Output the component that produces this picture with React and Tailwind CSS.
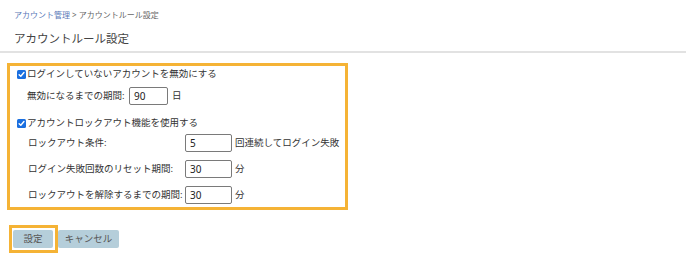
import React from "react";

const font = { fontFamily: '"Noto Sans", "Noto Sans CJK JP", sans-serif' };

function Check() {
  return (
    <span className="inline-flex h-[9px] w-[9px] shrink-0 items-center justify-center rounded-[1.5px] bg-[#1a6fe0]">
      <svg width="7" height="7" viewBox="0 0 8 8">
        <path d="M1.3 4.2 L3.2 6 L6.8 1.8" fill="none" stroke="#fff" strokeWidth="1.6" strokeLinecap="round" strokeLinejoin="round" />
      </svg>
    </span>
  );
}

function Input({ value, w }) {
  return (
    <div className={`flex h-[18px] ${w} items-center rounded-[2px] border border-[#7a7a7a] bg-white pl-[4px] text-[10px] text-[#222]`}>
      {value}
    </div>
  );
}

export default function App() {
  return (
    <div className="h-[257px] w-[686px] bg-white text-[#333]" style={font}>
      <div className="pl-[14px] pt-[10px] text-[8px] leading-[10px]">
        <span className="text-[#5a78b8]">アカウント管理</span>
        <span className="text-[#666]"> &gt; アカウントルール設定</span>
      </div>
      <div className="pl-[14px] pt-[12px] text-[11.5px] leading-[14px] text-[#444]">アカウントルール設定</div>
      <div className="mt-[5px] h-[2px] w-full bg-[#e2e2e2]" />
      <div className="ml-[7px] mt-[10px] w-[341px] border-[3px] border-[#f5b335] pb-[3px] pl-[7px] pt-0 text-[9.5px]">
        <div className="flex h-[16px] items-center gap-[1px]">
          <Check />
          <span>ログインしていないアカウントを無効にする</span>
        </div>
        <div className="ml-[10px] mt-[5px] flex items-center">
          <span className="w-[102px]">無効になるまでの期間:</span>
          <Input value="90" w="w-[39px]" />
          <span className="ml-[4px]">日</span>
        </div>
        <div className="mt-[10px] flex h-[16px] items-center gap-[1px]">
          <Check />
          <span>アカウントロックアウト機能を使用する</span>
        </div>
        <div className="ml-[11px] mt-[3px] flex items-center">
          <span className="w-[157px]">ロックアウト条件:</span>
          <Input value="5" w="w-[47px]" />
          <span className="ml-[3px]">回連続してログイン失敗</span>
        </div>
        <div className="ml-[11px] mt-[8px] flex items-center">
          <span className="w-[157px]">ログイン失敗回数のリセット期間:</span>
          <Input value="30" w="w-[47px]" />
          <span className="ml-[3px]">分</span>
        </div>
        <div className="ml-[11px] mt-[8px] flex items-center">
          <span className="w-[157px] whitespace-nowrap">ロックアウトを解除するまでの期間:</span>
          <Input value="30" w="w-[47px]" />
          <span className="ml-[3px]">分</span>
        </div>
      </div>
      <div className="ml-[9px] mt-[15px] flex items-center text-[9.5px] text-[#555]">
        <div className="border-[3px] border-[#f5b335] pb-[2px] pl-[1px] pr-[2px] pt-[2px]">
          <button className="block h-[18px] w-[40px] rounded-[2px] bg-[#b5ceda]">設定</button>
        </div>
        <button className="h-[18px] w-[61px] rounded-[2px] bg-[#b5ceda]">キャンセル</button>
      </div>
    </div>
  );
}
